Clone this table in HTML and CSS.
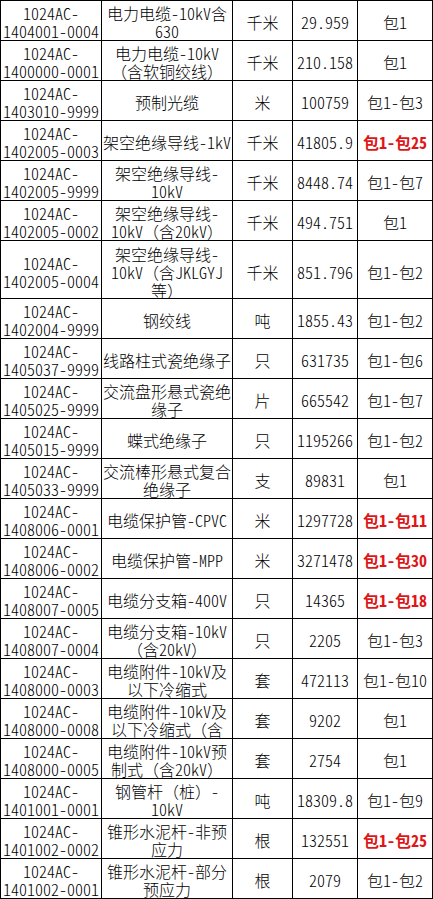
FILE: index.html
```html
<!DOCTYPE html>
<html lang="zh-CN">
<head>
<meta charset="utf-8">
<title>物资清单</title>
<link rel="stylesheet" href="styles.css">
</head>
<body>
<div class="sheet">
  <div class="row"><div class="c">1024AC-<br>1404001-0004</div><div class="c">电力电缆-10kV含<br>630</div><div class="c">千米</div><div class="c">29.959</div><div class="c">包1</div></div>
  <div class="row"><div class="c">1024AC-<br>1400000-0001</div><div class="c"><span class="t">电力电缆-10kV<br><span class="fw">（</span>含软铜绞线<span class="fw">）</span></span></div><div class="c">千米</div><div class="c">210.158</div><div class="c">包1</div></div>
  <div class="row"><div class="c">1024AC-<br>1403010-9999</div><div class="c">预制光缆</div><div class="c">米</div><div class="c">100759</div><div class="c">包1-包3</div></div>
  <div class="row"><div class="c">1024AC-<br>1402005-0003</div><div class="c">架空绝缘导线-1kV</div><div class="c">千米</div><div class="c">41805.9</div><div class="c hot">包1-包25</div></div>
  <div class="row"><div class="c">1024AC-<br>1402005-9999</div><div class="c">架空绝缘导线-<br>10kV</div><div class="c">千米</div><div class="c">8448.74</div><div class="c">包1-包7</div></div>
  <div class="row"><div class="c">1024AC-<br>1402005-0002</div><div class="c"><span class="t">架空绝缘导线-<br>10kV<span class="fw">（</span>含20kV<span class="fw">）</span></span></div><div class="c">千米</div><div class="c">494.751</div><div class="c">包1</div></div>
  <div class="row tall"><div class="c">1024AC-<br>1402005-0004</div><div class="c"><span class="t">架空绝缘导线-<br>10kV<span class="fw">（</span>含JKLGYJ<br>等<span class="fw">）</span></span></div><div class="c">千米</div><div class="c">851.796</div><div class="c">包1-包2</div></div>
  <div class="row"><div class="c">1024AC-<br>1402004-9999</div><div class="c">钢绞线</div><div class="c">吨</div><div class="c">1855.43</div><div class="c">包1-包2</div></div>
  <div class="row"><div class="c">1024AC-<br>1405037-9999</div><div class="c">线路柱式瓷绝缘子</div><div class="c">只</div><div class="c">631735</div><div class="c">包1-包6</div></div>
  <div class="row"><div class="c">1024AC-<br>1405025-9999</div><div class="c">交流盘形悬式瓷绝<br>缘子</div><div class="c">片</div><div class="c">665542</div><div class="c">包1-包7</div></div>
  <div class="row"><div class="c">1024AC-<br>1405015-9999</div><div class="c">蝶式绝缘子</div><div class="c">只</div><div class="c">1195266</div><div class="c">包1-包2</div></div>
  <div class="row"><div class="c">1024AC-<br>1405033-9999</div><div class="c">交流棒形悬式复合<br>绝缘子</div><div class="c">支</div><div class="c">89831</div><div class="c">包1</div></div>
  <div class="row"><div class="c">1024AC-<br>1408006-0001</div><div class="c">电缆保护管-CPVC</div><div class="c">米</div><div class="c">1297728</div><div class="c hot">包1-包11</div></div>
  <div class="row"><div class="c">1024AC-<br>1408006-0002</div><div class="c">电缆保护管-MPP</div><div class="c">米</div><div class="c">3271478</div><div class="c hot">包1-包30</div></div>
  <div class="row"><div class="c">1024AC-<br>1408007-0005</div><div class="c">电缆分支箱-400V</div><div class="c">只</div><div class="c">14365</div><div class="c hot">包1-包18</div></div>
  <div class="row"><div class="c">1024AC-<br>1408007-0004</div><div class="c"><span class="t">电缆分支箱-10kV<br><span class="fw">（</span>含20kV<span class="fw">）</span></span></div><div class="c">只</div><div class="c">2205</div><div class="c">包1-包3</div></div>
  <div class="row"><div class="c">1024AC-<br>1408000-0003</div><div class="c">电缆附件-10kV及<br>以下冷缩式</div><div class="c">套</div><div class="c">472113</div><div class="c">包1-包10</div></div>
  <div class="row"><div class="c">1024AC-<br>1408000-0008</div><div class="c"><span class="t">电缆附件-10kV及<br>以下冷缩式<span class="fw">（</span>含</span></div><div class="c">套</div><div class="c">9202</div><div class="c">包1</div></div>
  <div class="row"><div class="c">1024AC-<br>1408000-0005</div><div class="c"><span class="t">电缆附件-10kV预<br>制式<span class="fw">（</span>含20kV<span class="fw">）</span></span></div><div class="c">套</div><div class="c">2754</div><div class="c">包1</div></div>
  <div class="row"><div class="c">1024AC-<br>1401001-0001</div><div class="c"><span class="t">钢管杆<span class="fw">（</span>桩<span class="fw">）</span>-<br>10kV</span></div><div class="c">吨</div><div class="c">18309.8</div><div class="c">包1-包9</div></div>
  <div class="row"><div class="c">1024AC-<br>1401002-0002</div><div class="c">锥形水泥杆-非预<br>应力</div><div class="c">根</div><div class="c">132551</div><div class="c hot">包1-包25</div></div>
  <div class="row"><div class="c">1024AC-<br>1401002-0001</div><div class="c">锥形水泥杆-部分<br>预应力</div><div class="c">根</div><div class="c">2079</div><div class="c">包1-包2</div></div>
</div>
</body>
</html>
```
FILE: styles.css
```css
html, body {
  margin: 0;
  padding: 0;
  background: #fff;
}

.sheet {
  display: grid;
  grid-template-columns: 100px 130px 59px 64px 74px;
  grid-auto-rows: minmax(39px, auto);
  gap: 1px;
  padding: 1px;
  width: max-content;
  background: #000;
  font-family: "Noto Sans CJK SC", sans-serif;
  font-feature-settings: "hwid" 1;
  font-size: 16px;
  font-weight: 300;
  line-height: 18px;
  color: #000;
}

.row {
  display: contents;
}

.c {
  display: flex;
  flex-direction: column;
  justify-content: center;
  align-items: center;
  text-align: center;
  white-space: nowrap;
  background: #fff;
  height: 39px;
  padding-top: 2px;
  box-sizing: border-box;
}

.t {
  display: block;
}

.fw {
  font-feature-settings: normal;
}

.tall .c {
  height: 57px;
  padding-top: 5px;
}

.hot {
  color: #e01515;
  font-weight: bold;
}
```
